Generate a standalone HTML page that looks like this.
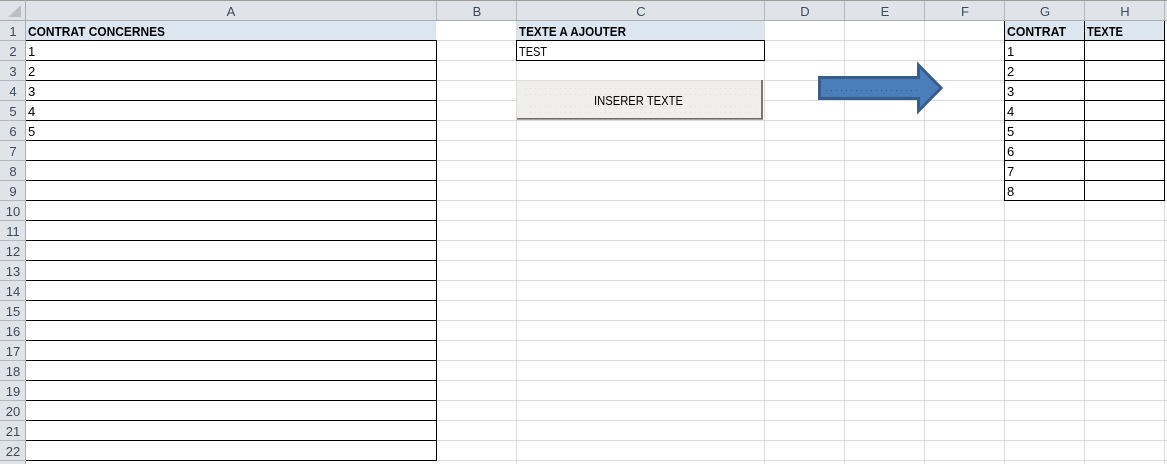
<!DOCTYPE html>
<html>
<head>
<meta charset="utf-8">
<style>
html,body{margin:0;padding:0;background:#fff;width:1167px;height:464px;overflow:hidden}
svg{display:block}
text{font-family:"Liberation Sans",sans-serif;font-size:13px;fill:#000}
.h{fill:#3b4a5c;text-anchor:middle}
.b{font-weight:bold}
</style>
</head>
<body>
<svg width="1167" height="464" viewBox="0 0 1167 464" xmlns="http://www.w3.org/2000/svg">
<g shape-rendering="crispEdges">
<!-- headers -->
<rect x="0" y="0" width="1167" height="20" fill="#e0e3e8"/>
<rect x="0" y="0" width="25" height="464" fill="#e0e3e8"/>
<rect x="0" y="0" width="1167" height="1" fill="#9c9c9c"/>
<rect x="0" y="20" width="1167" height="1" fill="#a9acb1"/>
<rect x="25" y="0" width="1" height="464" fill="#a9acb1"/>
<!-- column header separators -->
<path d="M436.5 1V20M516.5 1V20M764.5 1V20M844.5 1V20M924.5 1V20M1004.5 1V20M1084.5 1V20M1164.5 1V20" stroke="#b4b7bc" fill="none"/>
<!-- row header separators -->
<path d="M0 40.5H25M0 60.5H25M0 80.5H25M0 100.5H25M0 120.5H25M0 140.5H25M0 160.5H25M0 180.5H25M0 200.5H25M0 220.5H25M0 240.5H25M0 260.5H25M0 280.5H25M0 300.5H25M0 320.5H25M0 340.5H25M0 360.5H25M0 380.5H25M0 400.5H25M0 420.5H25M0 440.5H25M0 460.5H25" stroke="#b4b7bc" fill="none"/>
<!-- gridlines -->
<path d="M437 40.5H1167M437 60.5H1167M437 80.5H1167M437 100.5H1167M437 120.5H1167M437 140.5H1167M437 160.5H1167M437 180.5H1167M437 200.5H1167M437 220.5H1167M437 240.5H1167M437 260.5H1167M437 280.5H1167M437 300.5H1167M437 320.5H1167M437 340.5H1167M437 360.5H1167M437 380.5H1167M437 400.5H1167M437 420.5H1167M437 440.5H1167M437 460.5H1167" stroke="#dcdcdc" fill="none"/>
<path d="M516.5 21V464M764.5 21V464M844.5 21V464M924.5 21V464M1004.5 21V464M1084.5 21V464M1164.5 21V464" stroke="#dcdcdc" fill="none"/>
<!-- bold header fills -->
<rect x="26" y="21" width="410" height="19" fill="#dce6f1"/>
<rect x="517" y="21" width="247" height="19" fill="#dce6f1"/>
<rect x="1005" y="21" width="79" height="19" fill="#dce6f1"/>
<rect x="1085" y="21" width="79" height="19" fill="#dce6f1"/>
<!-- white cell backgrounds -->
<rect x="26" y="41" width="410" height="419" fill="#fff"/>
<rect x="517" y="41" width="247" height="19" fill="#fff"/>
<rect x="1005" y="41" width="159" height="159" fill="#fff"/>
<!-- black borders: column A -->
<path d="M26 40.5H437M26 60.5H437M26 80.5H437M26 100.5H437M26 120.5H437M26 140.5H437M26 160.5H437M26 180.5H437M26 200.5H437M26 220.5H437M26 240.5H437M26 260.5H437M26 280.5H437M26 300.5H437M26 320.5H437M26 340.5H437M26 360.5H437M26 380.5H437M26 400.5H437M26 420.5H437M26 440.5H437M26 460.5H437M436.5 40V461" stroke="#000" fill="none"/>
<!-- black borders: column C -->
<path d="M516 40.5H765M516 60.5H765M516.5 40V61M764.5 40V61" stroke="#000" fill="none"/>
<!-- black borders: G/H -->
<path d="M1004 40.5H1165M1004 60.5H1165M1004 80.5H1165M1004 100.5H1165M1004 120.5H1165M1004 140.5H1165M1004 160.5H1165M1004 180.5H1165M1004 200.5H1165M1004.5 21V201M1084.5 21V201M1164.5 21V201" stroke="#000" fill="none"/>
<!-- button -->
<rect x="517" y="81" width="245" height="38" fill="#f0efed"/>
<path d="M525 88.5H756M525 94.5H756M525 106.5H756M525 112.5H756" stroke="#e0e0e6" stroke-dasharray="1 4" fill="none"/>
<rect x="761" y="80" width="2" height="40" fill="#777"/>
<rect x="517" y="118" width="246" height="1" fill="#6e6e6e"/>
<rect x="517" y="119" width="246" height="1" fill="#a0a0a0"/>
</g>
<!-- corner triangle -->
<path d="M21 5V17H8Z" fill="#bcc0c5"/>
<!-- arrow -->
<path d="M819.5 77.5H918.5V65L941 88L918.5 111V98.5H819.5Z" fill="#4a7ebb" stroke="#385d8a" stroke-width="3"/>
<path d="M826 90.5H920" stroke="#2f5688" stroke-width="1" stroke-dasharray="1 4" fill="none"/>
<g transform="translate(0,1)">
<!-- column letters -->
<text class="h" x="231" y="15">A</text>
<text class="h" x="477" y="15">B</text>
<text class="h" x="641" y="15">C</text>
<text class="h" x="805" y="15">D</text>
<text class="h" x="885" y="15">E</text>
<text class="h" x="965" y="15">F</text>
<text class="h" x="1045" y="15">G</text>
<text class="h" x="1125" y="15">H</text>
<!-- row numbers -->
<text class="h" x="13" y="35">1</text>
<text class="h" x="13" y="55">2</text>
<text class="h" x="13" y="75">3</text>
<text class="h" x="13" y="95">4</text>
<text class="h" x="13" y="115">5</text>
<text class="h" x="13" y="135">6</text>
<text class="h" x="13" y="155">7</text>
<text class="h" x="13" y="175">8</text>
<text class="h" x="13" y="195">9</text>
<text class="h" x="13" y="215">10</text>
<text class="h" x="13" y="235">11</text>
<text class="h" x="13" y="255">12</text>
<text class="h" x="13" y="275">13</text>
<text class="h" x="13" y="295">14</text>
<text class="h" x="13" y="315">15</text>
<text class="h" x="13" y="335">16</text>
<text class="h" x="13" y="355">17</text>
<text class="h" x="13" y="375">18</text>
<text class="h" x="13" y="395">19</text>
<text class="h" x="13" y="415">20</text>
<text class="h" x="13" y="435">21</text>
<text class="h" x="13" y="455">22</text>
<!-- A -->
<text class="b" x="28" y="35" textLength="137" lengthAdjust="spacingAndGlyphs">CONTRAT CONCERNES</text>
<text x="28" y="55">1</text>
<text x="28" y="75">2</text>
<text x="28" y="95">3</text>
<text x="28" y="115">4</text>
<text x="28" y="135">5</text>
<!-- C -->
<text class="b" x="519" y="35" textLength="107" lengthAdjust="spacingAndGlyphs">TEXTE A AJOUTER</text>
<text x="519" y="55" textLength="28" lengthAdjust="spacingAndGlyphs">TEST</text>
<!-- G/H -->
<text class="b" x="1007" y="35" textLength="59" lengthAdjust="spacingAndGlyphs">CONTRAT</text>
<text class="b" x="1087" y="35" textLength="36" lengthAdjust="spacingAndGlyphs">TEXTE</text>
<text x="1007" y="55">1</text>
<text x="1007" y="75">2</text>
<text x="1007" y="95">3</text>
<text x="1007" y="115">4</text>
<text x="1007" y="135">5</text>
<text x="1007" y="155">6</text>
<text x="1007" y="175">7</text>
<text x="1007" y="195">8</text>
</g>
<text x="594" y="105" textLength="89" lengthAdjust="spacingAndGlyphs">INSERER TEXTE</text>
</svg>
</body>
</html>
